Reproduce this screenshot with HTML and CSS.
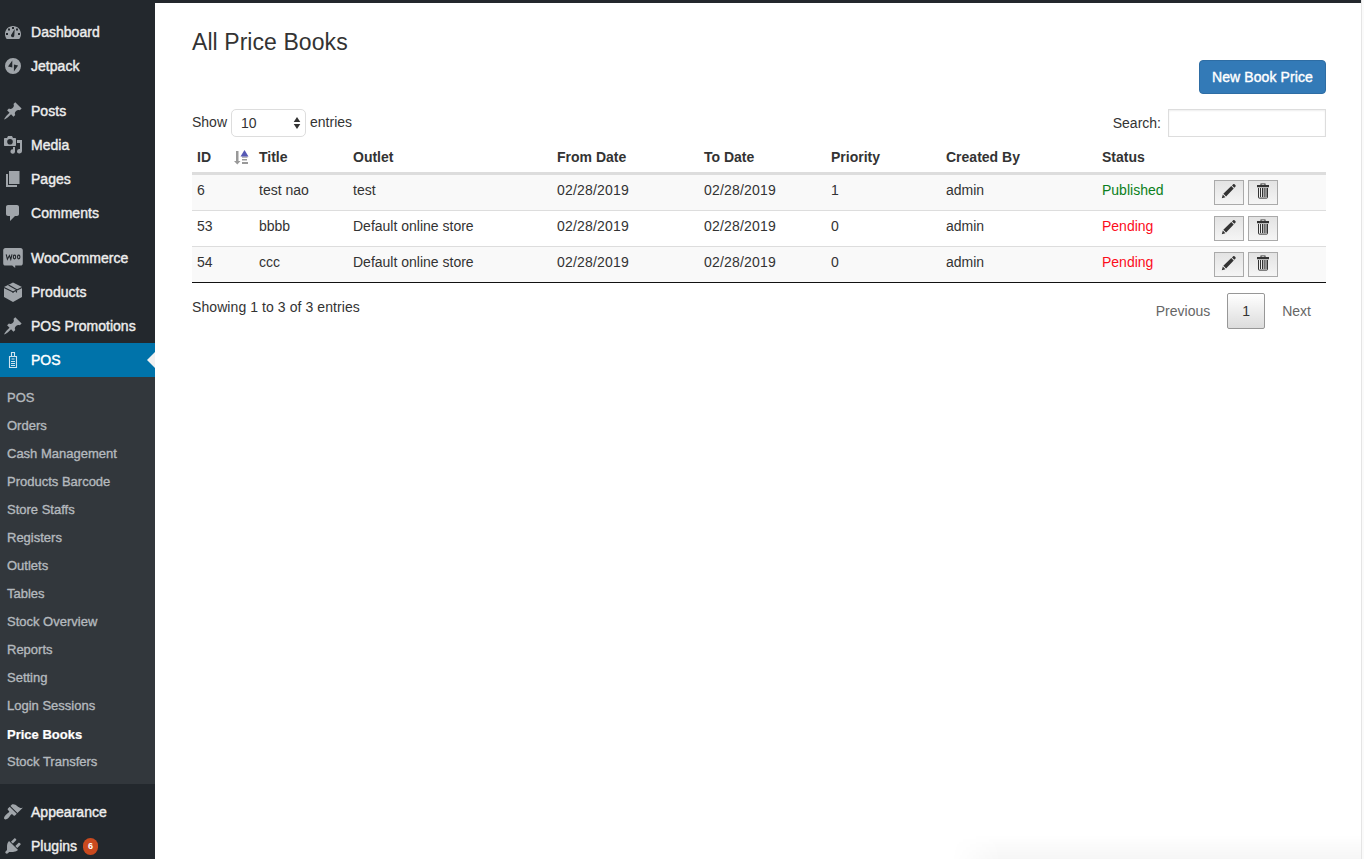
FILE: index.html
```html
<!DOCTYPE html>
<html lang="en">
<head>
<meta charset="utf-8">
<title>All Price Books</title>
<link rel="stylesheet" href="styles.css">
</head>
<body>
<svg class="defs" width="0" height="0">
  <symbol id="pin" viewBox="0 0 20 20"><path d="M10.44 3.02l1.82-1.82 6.36 6.35-1.83 1.82c-1.05-.68-2.48-.57-3.41.36l-.75.75c-.92.93-1.04 2.35-.35 3.41l-1.83 1.82-2.41-2.41-2.8 2.79c-.42.42-3.38 2.71-3.8 2.29s1.86-3.39 2.28-3.81l2.79-2.79L4.1 9.36l1.83-1.82c1.05.69 2.48.57 3.4-.36l.75-.75c.93-.92 1.05-2.35.36-3.41z"/></symbol>
  <symbol id="pencil" viewBox="0 0 16 16"><path d="M.8 15.200l1-3.600 2.600 2.600zM2.300 10.700l8-7.600 2.400 2.400-7.600 8zM11 2.500l1.200-1.200c.4-.4.9-.3 1.300 0l1 1c.4.4.4.900 0 1.300L13.300 4.800z"/></symbol>
  <symbol id="trash" viewBox="0 0 14 16"><path fill-rule="evenodd" d="M4.500 2V.5h5V2H13v2.200H1V2zM5.500 1.300V2h3v-.7z"/><path fill="none" stroke="#333" d="M2.500 5v9.500c0 .4.200.6.600.6h7.800c.4 0 .6-.2.600-.6V5M4.500 5v9M6.500 5v9M8.200 5v9M10 5v9"/></symbol>
</svg>
<div class="layout">
  <nav class="sidebar">
    <ul class="menu">
      <li><svg viewBox="0 0 20 20"><path fill-rule="evenodd" d="M3.760 17h12.480C17.340 15.630 18 13.890 18 12c0-4.410-3.580-8-8-8s-8 3.590-8 8c0 1.890.66 3.630 1.760 5zM9 5h2v2H9zM5 6.500h2v2H5zM13 6.500h2v2h-2zM3 11h2v2H3zM15 11h2v2h-2zM11.700 7l-.4 6.500c0 1-.7 1.800-1.600 1.800S8 14.500 8 13.600c0-.5.200-1 .6-1.300z"/></svg>Dashboard</li>
      <li><svg viewBox="0 0 20 20"><path fill-rule="evenodd" d="M10 2a8 8 0 1 0 0 16 8 8 0 0 0 0-16zM9.300 4.500v7L5 10.600zM10.900 15.500v-7l4.200.9z"/></svg>Jetpack</li>
      <li class="group"><svg viewBox="0 0 20 20"><use href="#pin"/></svg>Posts</li>
      <li><svg viewBox="0 0 20 20"><path fill-rule="evenodd" d="M2 3h2l1-2h4l1 2h2c.6 0 1 .4 1 1v6c0 .6-.4 1-1 1H2c-.6 0-1-.4-1-1V4c0-.6.4-1 1-1zM7 4a2.800 2.800 0 1 0 0 5.600A2.800 2.800 0 0 0 7 4z"/><path d="M14 5h5v11.300a2.500 2.200 0 1 1-2-2.200V8h-3zM10 12h2v4.700a2.300 2.200 0 1 1-2-2.300z"/></svg>Media</li>
      <li><svg viewBox="0 0 20 20"><path d="M6 2h10.500v13H6zM3 5h2v11h9v2H3z"/></svg>Pages</li>
      <li><svg viewBox="0 0 20 20"><path d="M5 2h9c1.100 0 2 .9 2 2v7c0 1.100-.9 2-2 2h-2l-5 5v-5H5c-1.100 0-2-.9-2-2V4c0-1.100.9-2 2-2z"/></svg>Comments</li>
      <li class="group"><svg viewBox="0 0 20 20"><path d="M2.500 0h15C19 0 19.800 1 19.800 2.300v13c0 1.400-.8 2.300-2.300 2.300h-5.300V20l-3-2.400H2.500C1 17.600.2 16.700.2 15.300v-13C.2 1 1 0 2.500 0z"/><path class="line" d="M3.200 6.300l1.200 5 2-3.800 1.400 3.800 1.200-5"/><ellipse class="line" cx="11.500" cy="9" rx="1.200" ry="1.900"/><ellipse class="line" cx="15.700" cy="9" rx="1.200" ry="1.900"/></svg>WooCommerce</li>
      <li><svg viewBox="0 0 20 20"><path d="M10 .5l9 4.600v10L10 20l-9-4.900v-10z"/><path class="line" d="M1 5.500l9 4.500 9-4.500M5.500 3l8 4.500v3M10 10v1"/></svg>Products</li>
      <li><svg viewBox="0 0 20 20"><use href="#pin"/></svg>POS Promotions</li>
      <li class="current"><svg viewBox="0 0 20 20"><path class="terminal" d="M8.500 7V2.500h3V7M6.500 6.500h7v11h-7zM8.500 9h3M8 11.500h4M8 13.500h4M8 15.500h4"/></svg>POS</li>
    </ul>
    <ul class="submenu">
      <li>POS</li><li>Orders</li><li>Cash Management</li><li>Products Barcode</li><li>Store Staffs</li><li>Registers</li><li>Outlets</li><li>Tables</li><li>Stock Overview</li><li>Reports</li><li>Setting</li><li>Login Sessions</li><li class="active">Price Books</li><li>Stock Transfers</li>
    </ul>
    <ul class="menu">
      <li class="group"><svg viewBox="0 0 20 20"><path d="M14.480 11.060L7.410 3.990l1.500-1.500c.5-.56 2.300-.47 3.510.32 1.210.8 1.430 1.280 2.910 2.100 1.180.64 2.450 1.260 4.450.85zm-.71.71L6.700 4.700 4.930 6.470c-.39.39-.39 1.020 0 1.410l1.060 1.060c.39.39.39 1.030 0 1.420-.6.600-1.430 1.110-2.210 1.690-.35.26-.7.530-1.010.84C1.430 14.230.4 16.080 1.400 17.070c.99 1 2.840-.03 4.180-1.360.31-.31.58-.66.85-1.020.57-.78 1.080-1.610 1.690-2.210.39-.39 1.020-.39 1.410 0l1.060 1.060c.39.39 1.020.39 1.410 0z"/></svg>Appearance</li>
      <li><svg viewBox="0 0 20 20"><path d="M13.110 4.360L9.870 7.600 8 5.730l3.240-3.240c.35-.34 1.050-.2 1.560.32.520.51.66 1.210.31 1.550zm-8 1.770l.91-1.120 9.010 9.010-1.190.84c-.71.71-2.630 1.160-3.820 1.160H6.140L4.900 17.260c-.59.59-1.540.59-2.120 0-.59-.58-.59-1.530 0-2.120l1.240-1.240v-3.880c0-1.130.4-3.190 1.090-3.890zm7.260 3.970l3.240-3.240c.34-.35 1.040-.21 1.550.31.520.51.66 1.210.31 1.550l-3.240 3.250z"/></svg>Plugins<span class="badge">6</span></li>
    </ul>
  </nav>
  <main class="page">
    <h1>All Price Books</h1>
    <div class="actions"><button class="primary">New Book Price</button></div>
    <div class="filters">
      <label class="length"><span class="word">Show</span> <span class="select">10<svg width="8" height="14" viewBox="0 0 8 14"><path d="M.7 6L4 1l3.300 5zM.7 8L4 13l3.300-5z"/></svg></span> <span class="word">entries</span></label>
      <label class="search">Search:<input type="text"></label>
    </div>
    <table>
      <colgroup><col class="c-id"><col class="c-title"><col class="c-outlet"><col class="c-from"><col class="c-to"><col class="c-priority"><col class="c-author"><col class="c-status"><col></colgroup>
      <thead><tr><th><span class="sorted">ID<svg width="15" height="15" viewBox="0 0 15 15"><path fill="#999" d="M2 1h2.500v10h2l-3.200 3.500L0 11h2zM8 9h5v1.500H8zM8 12h6v2H8z"/><path fill="#999" d="M8 6.500h5.500v1.200H8z"/><path fill="#5659b5" d="M10.500 0l4 6.500h-8z"/></svg></span></th><th>Title</th><th>Outlet</th><th>From Date</th><th>To Date</th><th>Priority</th><th>Created By</th><th>Status</th><th></th></tr></thead>
      <tbody>
        <tr><td>6</td><td>test nao</td><td>test</td><td class="date">02/28/2019</td><td class="date">02/28/2019</td><td>1</td><td>admin</td><td class="published">Published</td><td><div class="tools"><button><svg width="16" height="16"><use href="#pencil"/></svg></button><button><svg width="14" height="16"><use href="#trash"/></svg></button></div></td></tr>
        <tr><td>53</td><td>bbbb</td><td>Default online store</td><td class="date">02/28/2019</td><td class="date">02/28/2019</td><td>0</td><td>admin</td><td class="pending">Pending</td><td><div class="tools"><button><svg width="16" height="16"><use href="#pencil"/></svg></button><button><svg width="14" height="16"><use href="#trash"/></svg></button></div></td></tr>
        <tr><td>54</td><td>ccc</td><td>Default online store</td><td class="date">02/28/2019</td><td class="date">02/28/2019</td><td>0</td><td>admin</td><td class="pending">Pending</td><td><div class="tools"><button><svg width="16" height="16"><use href="#pencil"/></svg></button><button><svg width="14" height="16"><use href="#trash"/></svg></button></div></td></tr>
      </tbody>
    </table>
    <div class="summary">
      <span class="info">Showing 1 to 3 of 3 entries</span>
      <div class="pager"><span>Previous</span><span class="page-number">1</span><span>Next</span></div>
    </div>
    <div class="shade"></div>
  </main>
</div>
</body>
</html>
```
FILE: styles.css
```css
* { box-sizing: border-box; }
body { margin: 0; overflow: hidden; background: #fafafa; color: #333; font: 14px/20px "Liberation Sans", Arial, sans-serif; }
ul { list-style: none; margin: 0; padding: 0; }
button { font: inherit; margin: 0; padding: 0; }
.defs { position: absolute; }
.layout { display: flex; height: 859px; overflow: hidden; }

.sidebar { width: 155px; flex: none; padding-top: 15px; background: #23282d; color: #eee; overflow: hidden; }
.menu li { display: flex; align-items: center; height: 34px; padding-left: 3px; letter-spacing: .03px; -webkit-text-stroke: .4px currentColor; }
.menu li.group { margin-top: 11px; }
.menu svg { width: 20px; height: 20px; margin: 0 8px 1px 0; flex: none; fill: #a0a5aa; -webkit-text-stroke: 0; }
.menu .line { fill: none; stroke: #23282d; stroke-width: 1.1; }
.menu .terminal { fill: none; stroke: #cfe3ef; stroke-width: 1.1; }
.menu li.current { position: relative; background: #0073aa; color: #fff; }
.current::after { content: ""; position: absolute; right: 0; top: 9px; border: 8px solid transparent; border-left: 0; border-right-color: #f1f1f1; }
.submenu { height: 407px; padding: 7px 0 0 7px; background: #32373c; color: #b4b9be; font-size: 13px; -webkit-text-stroke: .35px currentColor; }
.submenu li { height: 28px; line-height: 28px; }
.submenu .active { color: #fff; font-weight: bold; line-height: 30px; -webkit-text-stroke: .2px #fff; }
.badge { width: 15px; height: 17px; margin-left: 6px; border-radius: 8px; background: #ca4a1f; color: #fff; font-size: 9px; line-height: 17px; font-weight: bold; text-align: center; -webkit-text-stroke: 0; }

.page { position: relative; width: 1207px; height: 859px; padding: 30px 35px 0 37px; background: #fff; border-right: 1px solid #e5e5e5; }
.page::before { content: ""; position: absolute; top: 0; left: 0; right: 0; height: 3px; background: #23282d; }
h1 { margin: 0; font-size: 23px; line-height: 24px; font-weight: normal; letter-spacing: .07px; }
.actions { display: flex; justify-content: flex-end; margin-top: 6px; }
.primary { width: 127px; height: 34px; border: 1px solid #2e6da4; border-radius: 4px; background: #337ab7; color: #fff; letter-spacing: .1px; -webkit-text-stroke: .4px #fff; }
.filters { display: flex; justify-content: space-between; height: 28px; margin-top: 15px; }
.length { display: flex; align-items: center; gap: 4px; }
.word { margin-bottom: 2px; }
.select { display: flex; align-items: center; justify-content: space-between; width: 75px; height: 28px; padding: 0 4px 0 9px; border: 1px solid #ddd; border-radius: 5px; }
.select svg { fill: #333; }
.search { display: flex; align-items: center; gap: 7px; }
.search input { width: 158px; height: 28px; border: 1px solid #ddd; box-shadow: inset 0 1px 2px rgba(0,0,0,.07); }

table { width: 1134px; margin-top: 7px; table-layout: fixed; border-collapse: separate; border-spacing: 0; border-bottom: 1px solid #111; }
.c-id { width: 62px; }
.c-title { width: 94px; }
.c-outlet { width: 204px; }
.c-from { width: 147px; }
.c-to { width: 127px; }
.c-priority { width: 115px; }
.c-author { width: 156px; }
.c-status { width: 112px; }
th { height: 31px; padding: 0 5px 3px; border-bottom: 3px solid #ddd; text-align: left; line-height: 20px; }
.sorted { display: flex; justify-content: space-between; align-items: center; }
.sorted svg { margin-top: 2px; }
td { height: 36px; padding: 5px 5px 0; border-top: 1px solid #ddd; vertical-align: top; }
tbody tr:first-child td { height: 35px; border-top: 0; }
tbody tr:nth-child(odd) { background: #f9f9f9; }
.date { letter-spacing: .2px; }
.published { color: #0a8020; }
.pending { color: #fc0d1b; }
.tools { display: flex; gap: 4px; }
.tools button { display: flex; align-items: center; justify-content: center; width: 30px; height: 25px; border: 1px solid #aaa; background: linear-gradient(#e3e3e3, #f5f5f5); color: #333; }
.tools svg { fill: #333; margin-bottom: 3px; }

.summary { display: flex; justify-content: space-between; }
.info { margin-top: 14px; letter-spacing: .08px; }
.pager { display: flex; margin-top: 10px; padding-right: 15px; color: #666; line-height: 36px; }
.page-number { width: 38px; height: 36px; margin: 0 17px; border: 1px solid #979797; border-radius: 2px; background: linear-gradient(#fff, #dcdcdc); color: #333; line-height: 35px; text-align: center; }
.shade { position: absolute; right: 0; bottom: 0; width: 410px; height: 24px; background: linear-gradient(transparent, rgba(0,0,0,.035)); -webkit-mask-image: linear-gradient(90deg, transparent, #000 50px); mask-image: linear-gradient(90deg, transparent, #000 50px); }
```
